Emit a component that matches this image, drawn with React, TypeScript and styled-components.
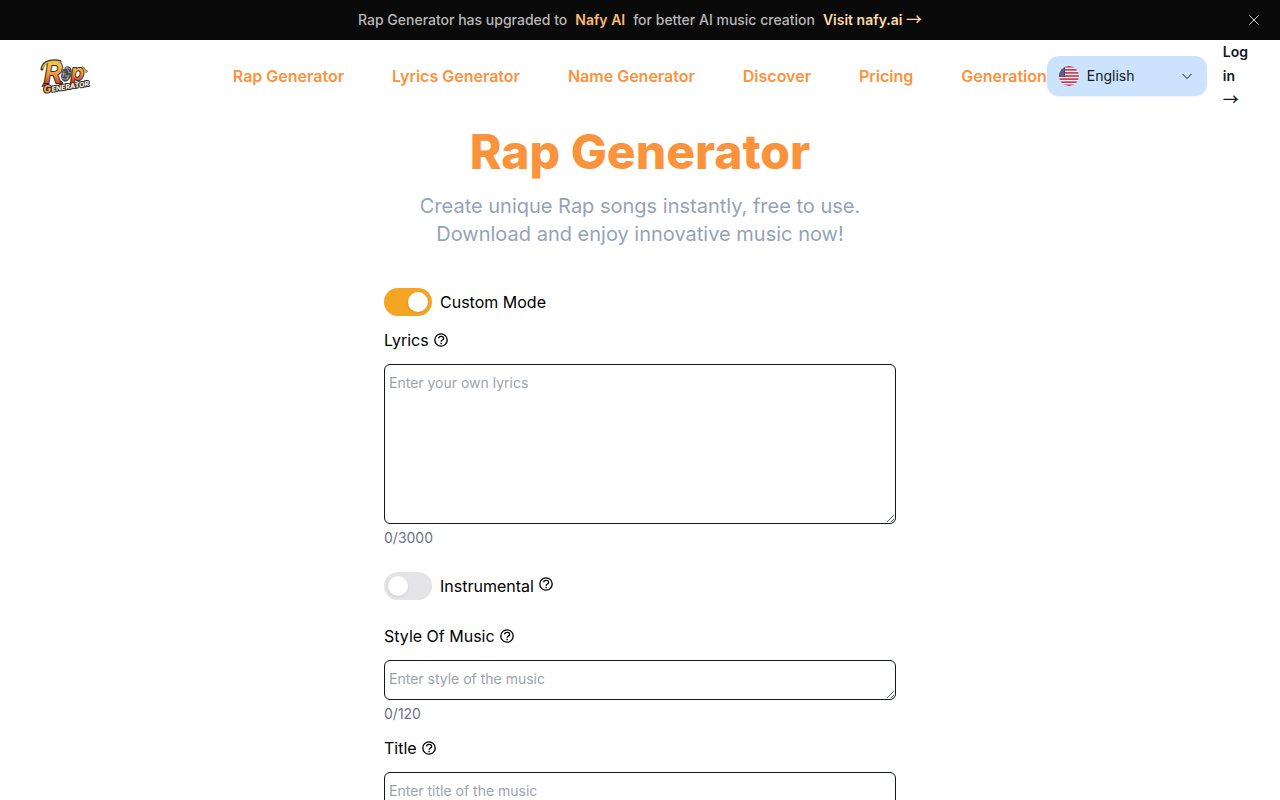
import React, { useState } from "react";
import styled, { createGlobalStyle } from "styled-components";

const GlobalStyle = createGlobalStyle`
  *, *::before, *::after { box-sizing: border-box; }
  body {
    margin: 0;
    background: #fff;
    color: #000;
    font-family: Inter, "Liberation Sans", sans-serif;
    font-size: 16px;
    line-height: 24px;
  }
  a { color: inherit; text-decoration: none; }
`;

const Banner = styled.aside`
  display: flex;
  align-items: center;
  height: 40px;
  padding: 0 16px;
  background: #0a0a0a;
  color: #b8b8b8;
  font-size: 14px;
  font-weight: 500;
  line-height: 20px;
`;

const BannerText = styled.p`
  display: flex;
  flex: 1;
  justify-content: center;
  gap: 8px;
  margin: 0;
  padding-left: 20px;
`;

const Brand = styled.strong`
  color: #fdba74;
  font-weight: 600;
`;

const BannerLink = styled.a`
  && { color: #fed7aa; }
  font-weight: 600;
`;

const Arrow = styled.span`
  font-family: "Noto Sans CJK SC", sans-serif;
  font-size: 16px;
  font-weight: 500;
  line-height: 1;
`;

const CloseButton = styled.button`
  display: flex;
  align-items: center;
  justify-content: center;
  width: 20px;
  height: 20px;
  padding: 0;
  border: 0;
  background: none;
  color: #d4d4d4;
  cursor: pointer;
`;

const Header = styled.header`
  display: flex;
  align-items: center;
  padding: 0 32px;
`;

const HeaderStart = styled.div`
  display: flex;
  flex: 1 1 0;
  padding-left: 8px;
`;

const LogoLink = styled.a`
  display: flex;
`;

const LogoArt = styled.svg`
  overflow: visible;
`;

const Nav = styled.nav`
  display: flex;
  flex: none;
  gap: 48px;
`;

const NavLink = styled.a`
  && { color: #fb923c; }
  font-weight: 600;
  white-space: nowrap;
`;

const HeaderEnd = styled.div`
  display: flex;
  flex: 1 1 0;
  align-items: center;
  justify-content: flex-end;
  gap: 16px;
`;

const LanguageBox = styled.div`
  display: flex;
  flex: none;
  align-items: center;
  gap: 8px;
  width: 160px;
  height: 40px;
  padding: 0 12px;
  border-radius: 12px;
  background: #cce3fd;
  box-shadow: 0 1px 2px rgba(0, 0, 0, 0.05);
`;

const LanguageSelect = styled.select`
  flex: 1;
  min-width: 0;
  padding: 0;
  border: 0;
  appearance: none;
  background: none;
  color: #11181c;
  font: inherit;
  font-size: 14px;
  line-height: 20px;
`;

const LoginLink = styled.a`
  && { color: #0f172a; }
  font-size: 14px;
  font-weight: 600;
`;

const Main = styled.main`
  display: flex;
  flex-direction: column;
  align-items: center;
  padding: 16px 24px 48px;
`;

const Title = styled.h1`
  margin: 0;
  color: #fb923c;
  font-size: 48px;
  font-weight: 800;
  line-height: 48px;
  text-align: center;
`;

const Subtitle = styled.p`
  margin: 16px 0 40px;
  color: #94a3b8;
  font-size: 20px;
  line-height: 28px;
  text-align: center;
`;

const Form = styled.form`
  width: 100%;
  max-width: 512px;
`;

const SwitchRow = styled.div`
  display: flex;
  align-items: center;
  gap: 4px;
  height: 28px;
`;

const SwitchLabel = styled.label`
  display: flex;
  align-items: center;
  gap: 8px;
  cursor: pointer;
`;

const SwitchInput = styled.input`
  display: flex;
  align-items: center;
  width: 48px;
  height: 28px;
  margin: 0;
  padding: 0 4px;
  border-radius: 14px;
  appearance: none;
  background: #e4e4e7;
  cursor: pointer;

  &::before {
    content: "";
    width: 20px;
    height: 20px;
    border-radius: 50%;
    background: #fff;
    box-shadow: 0 1px 3px rgba(0, 0, 0, 0.1);
  }
  &:checked { justify-content: flex-end; background: #f5a524; }
`;

const Field = styled.div<{ $gap: number }>`
  margin-top: ${(p) => p.$gap}px;
`;

const FieldHead = styled.div`
  display: flex;
  align-items: center;
  gap: 4px;
  margin-bottom: 12px;
`;

const HelpButton = styled.button<{ $raised?: boolean }>`
  display: flex;
  padding: 0;
  border: 0;
  background: none;
  color: #000;
  cursor: help;
  ${(p) => p.$raised && "margin-bottom: 4px;"}
`;

const TextArea = styled.textarea<{ $height: number }>`
  display: block;
  width: 100%;
  height: ${(p) => p.$height}px;
  padding: 8px 4px;
  border: 1px solid #11181c;
  border-radius: 6px;
  background: #fff;
  color: #11181c;
  font: inherit;
  font-size: 14px;
  line-height: 20px;
  overflow: hidden;

  &::placeholder { color: #9ca3af; }
`;

const Counter = styled.p`
  margin: 4px 0 0;
  color: #6b7280;
  font-size: 14px;
  line-height: 20px;
`;

const Logo = () => (
  <LogoArt width="48" height="36" viewBox="0 0 48 36" role="img" aria-label="Rap Generator">
    <defs>
      <linearGradient id="flame" x1="0" y1="0" x2="0" y2="1">
        <stop offset="0.25" stopColor="#f4c544" />
        <stop offset="0.55" stopColor="#f1933c" />
        <stop offset="0.8" stopColor="#d8442a" />
      </linearGradient>
    </defs>
    <path d="M2 11 Q3 5 9 3.500 Q15 2 20 3.500" fill="none" stroke="#3a2f26" strokeWidth="3" strokeLinecap="round" />
    <path d="M6 27 L2 28.500 L6 21 M17 20 L23 25 L20 27" fill="#d8442a" stroke="#3a2f26" strokeWidth="1" />
    <g fontFamily="Inter, sans-serif" fontStyle="italic" strokeLinejoin="round" paintOrder="stroke">
      <g fill="url(#flame)" stroke="#3a2f26" strokeWidth="2" fontWeight="600">
        <text x="4" y="25" fontSize="28">R</text>
        <text x="31" y="22" fontSize="21">p</text>
      </g>
      <path d="M2.500 10 Q4 5.500 9 4 Q15 2.500 20 4" fill="none" stroke="#e8bd48" strokeWidth="1.600" strokeLinecap="round" />
      <ellipse cx="26.500" cy="16" rx="5" ry="8" fill="#4a4a4a" transform="rotate(18 26.500 16)" />
      <path d="M24 11 q3-3 6 0 M22 16 h4 M28 14 l3 1 M22 20 q4 3 6-1 M26 9 l3 5 M24 13 l-1 6 M29 17 l-2 5 M25 18 h3" fill="none" stroke="#a5a19b" strokeWidth="1" />
      <path d="M42 9 q3 0 3 3 l2.500 1 -2 2" fill="#e9a544" stroke="#3a2f26" strokeWidth="1" />
      <g transform="rotate(-9 4 35)" stroke="#2b2420" strokeWidth="2" fontWeight="800">
        <text x="4" y="35" fontSize="10" fill="#f6a56a">G</text>
        <text x="12" y="35" fontSize="7" textAnchor="start" fill="#fbeedd">ENERATOR</text>
      </g>
    </g>
  </LogoArt>
);

const Flag = () => (
  <svg width="20" height="20" viewBox="0 0 20 20" aria-hidden="true">
    <clipPath id="flag-circle"><circle cx="10" cy="10" r="10" /></clipPath>
    <g clipPath="url(#flag-circle)">
      <rect width="20" height="20" fill="#f4f4f6" />
      {[0, 1, 2, 3, 4, 5, 6].map((i) => (
        <rect key={i} y={(i * 40) / 13} width="20" height={20 / 13} fill="#bf2b45" />
      ))}
      <rect width="6" height={140 / 13} fill="#3c3b6e" />
      {[1, 3, 5, 7, 9].map((y) => (
        <path key={y} d={`M0.8 ${y}h0.8M2.6 ${y}h0.8M4.4 ${y}h0.8M1.7 ${y + 1}h0.8M3.5 ${y + 1}h0.8`} stroke="#b9b8cf" strokeWidth="0.7" />
      ))}
    </g>
  </svg>
);

const HelpIcon = () => (
  <svg width="16" height="16" viewBox="0 0 24 24" fill="none" stroke="currentColor" strokeWidth="2" aria-hidden="true">
    <circle cx="12" cy="12" r="9.3" />
    <path d="M8.300 9.600 C8.600 7.600 10.300 6.600 12.200 6.600 C14.400 6.600 16 7.800 16 9.600 C16 12.200 12.200 12 12.200 14.700" />
    <path d="M12.200 16.200 V18.200" />
  </svg>
);

const navItems = ["Rap Generator", "Lyrics Generator", "Name Generator", "Discover", "Pricing", "Generation"];

const Help = ({ topic, raised }: { topic: string; raised?: boolean }) => (
  <HelpButton type="button" aria-label={`About ${topic}`} $raised={raised}>
    <HelpIcon />
  </HelpButton>
);

type TextFieldProps = { id: string; label: string; placeholder: string; max: number; height: number; gap: number };

const TextField = ({ id, label, placeholder, max, height, gap }: TextFieldProps) => {
  const [value, setValue] = useState("");
  return (
    <Field $gap={gap}>
      <FieldHead>
        <label htmlFor={id}>{label}</label>
        <Help topic={label} />
      </FieldHead>
      <TextArea
        id={id}
        $height={height}
        placeholder={placeholder}
        maxLength={max}
        value={value}
        onChange={(e) => setValue(e.target.value)}
      />
      <Counter>{`${value.length}/${max}`}</Counter>
    </Field>
  );
};

export default function App() {
  const [bannerOpen, setBannerOpen] = useState(true);
  return (
    <>
      <GlobalStyle />
      {bannerOpen && (
        <Banner>
          <BannerText>
            <span>Rap Generator has upgraded to</span>
            <Brand>Nafy AI</Brand>
            <span>for better AI music creation</span>
            <BannerLink href="#nafy">Visit nafy.ai <Arrow>→</Arrow></BannerLink>
          </BannerText>
          <CloseButton type="button" aria-label="Close" onClick={() => setBannerOpen(false)}>
            <svg width="10" height="10" viewBox="0 0 10 10" stroke="currentColor" strokeWidth="1" aria-hidden="true">
              <path d="M0.5 0.5 L9.5 9.5 M9.5 0.5 L0.5 9.5" />
            </svg>
          </CloseButton>
        </Banner>
      )}
      <Header>
        <HeaderStart>
          <LogoLink href="#home"><Logo /></LogoLink>
        </HeaderStart>
        <Nav>
          {navItems.map((item) => (
            <NavLink key={item} href={`#${item.toLowerCase().replace(" ", "-")}`}>{item}</NavLink>
          ))}
        </Nav>
        <HeaderEnd>
          <LanguageBox>
            <Flag />
            <LanguageSelect aria-label="Language" defaultValue="en">
              <option value="en">English</option>
            </LanguageSelect>
            <svg width="16" height="16" viewBox="0 0 16 16" fill="none" stroke="#11181c" strokeWidth="1" aria-hidden="true">
              <path d="M3.5 6 L8 10.5 L12.5 6" />
            </svg>
          </LanguageBox>
          <LoginLink href="#login">Log in <Arrow>→</Arrow></LoginLink>
        </HeaderEnd>
      </Header>
      <Main>
        <Title>Rap Generator</Title>
        <Subtitle>
          Create unique Rap songs instantly, free to use.
          <br />
          Download and enjoy innovative music now!
        </Subtitle>
        <Form>
          <SwitchRow>
            <SwitchLabel>
              <SwitchInput type="checkbox" role="switch" defaultChecked />
              Custom Mode
            </SwitchLabel>
          </SwitchRow>
          <TextField id="lyrics" label="Lyrics" placeholder="Enter your own lyrics" max={3000} height={160} gap={12} />
          <Field $gap={24}>
            <SwitchRow>
              <SwitchLabel>
                <SwitchInput type="checkbox" role="switch" />
                Instrumental
              </SwitchLabel>
              <Help topic="Instrumental" raised />
            </SwitchRow>
          </Field>
          <TextField id="style" label="Style Of Music" placeholder="Enter style of the music" max={120} height={40} gap={24} />
          <TextField id="title" label="Title" placeholder="Enter title of the music" max={80} height={40} gap={12} />
        </Form>
      </Main>
    </>
  );
}
